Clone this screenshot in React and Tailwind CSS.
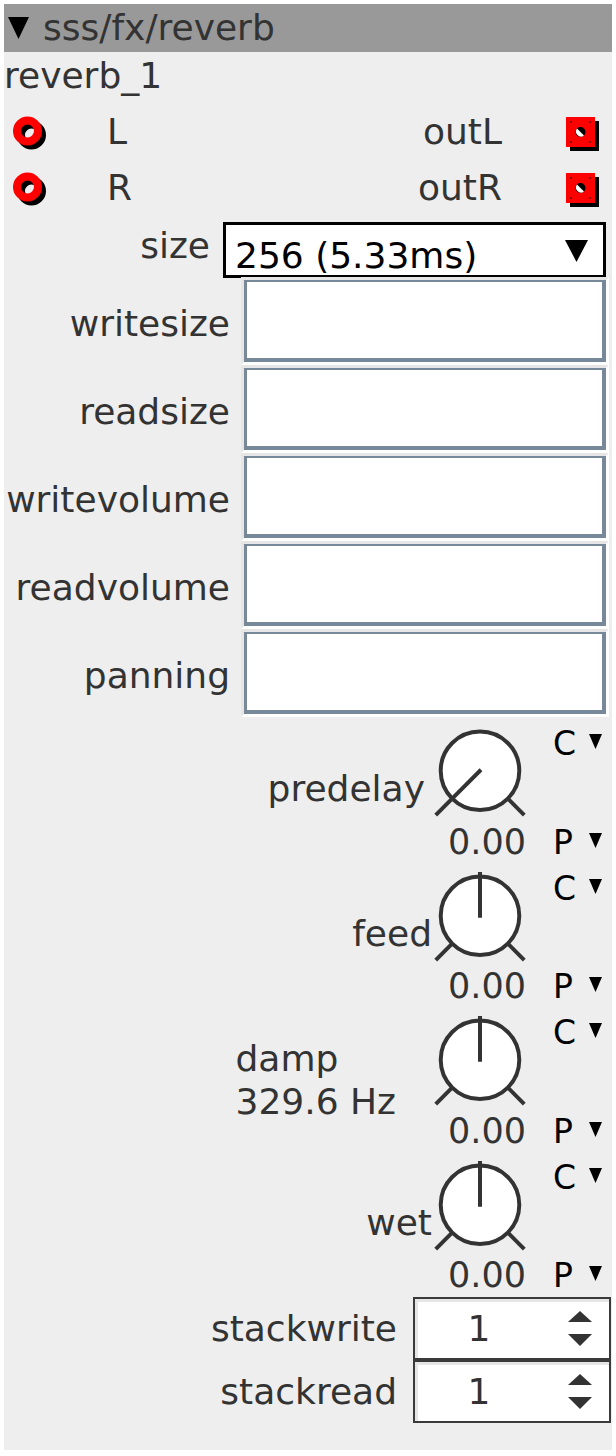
import React from 'react';

const txt = 'text-[36px] leading-[40px] text-[#333333]';

function Tri({ w, h, color = '#000', className = '' }) {
  return (
    <svg width={w} height={h} viewBox={`0 0 ${w} ${h}`} className={`block shrink-0 ${className}`}>
      <polygon points={`0,0 ${w},0 ${w / 2},${h}`} fill={color} />
    </svg>
  );
}

function UpTri({ w, h, color }) {
  return (
    <svg width={w} height={h} viewBox={`0 0 ${w} ${h}`} className="block">
      <polygon points={`0,${h} ${w},${h} ${w / 2},0`} fill={color} />
    </svg>
  );
}

function InPort() {
  return (
    <svg width="40" height="40" viewBox="0 0 40 40" className="block shrink-0">
      <circle cx="21.5" cy="23" r="10.5" fill="none" stroke="#000" strokeWidth="8" />
      <circle cx="17.5" cy="19" r="10.5" fill="none" stroke="#ff0000" strokeWidth="8" />
    </svg>
  );
}

function OutPort() {
  return (
    <svg width="40" height="40" viewBox="0 0 40 40" className="block shrink-0">
      <rect x="7" y="9" width="29" height="30" fill="#000" />
      <rect x="3" y="5" width="29" height="30" fill="#ff0000" />
      <rect x="7" y="9" width="2" height="2" fill="#8b0000" />
      <rect x="26" y="9" width="2" height="2" fill="#8b0000" />
      <rect x="7" y="29" width="2" height="2" fill="#8b0000" />
      <rect x="26" y="29" width="2" height="2" fill="#8b0000" />
      <circle cx="17.5" cy="20" r="5" fill="#000" />
      <path d="M14 16.5 A5 5 0 0 0 21 23.5 Z" fill="#fff" />
    </svg>
  );
}

function Knob({ min }) {
  return (
    <svg width="96" height="95" viewBox="0 0 96 95" className="block">
      <circle cx="48" cy="44" r="39.5" fill="#fff" stroke="#333" strokeWidth="4" />
      <line x1="20" y1="72" x2="3.5" y2="88.5" stroke="#333" strokeWidth="4" />
      <line x1="76" y1="72" x2="92.5" y2="88.5" stroke="#333" strokeWidth="4" />
      {min ? (
        <line x1="49" y1="43" x2="20" y2="72" stroke="#333" strokeWidth="4" />
      ) : (
        <line x1="48" y1="46" x2="48" y2="0" stroke="#333" strokeWidth="4" />
      )}
    </svg>
  );
}

function PortRow({ name, out }) {
  return (
    <div className="flex items-center h-[56px]">
      <div className="ml-[6px]">
        <InPort />
      </div>
      <span className={`${txt} ml-[57px]`}>{name}</span>
      <span className={`${txt} flex-1 text-right mr-[61px]`}>{out}</span>
      <div className="mr-[9px]">
        <OutPort />
      </div>
    </div>
  );
}

function Field({ name }) {
  return (
    <div className="flex h-[88px]">
      <div className={`${txt} flex-1 self-center text-right pr-[11px] mt-[5px] whitespace-nowrap`}>{name}</div>
      <div className="w-[368px] shrink-0 mr-[3px] border-[3px] border-t-[#e6e6e6] border-l-[#e6e6e6] border-b-white border-r-white">
        <div className="h-full bg-white border-[#778899] border-t-2 border-l-[3px] border-r-4 border-b-4" />
      </div>
    </div>
  );
}

function KnobBlock({ label, min, labelClass = '' }) {
  return (
    <div className="flex h-[144.5px]">
      <div className="flex-1 flex items-center justify-end">
        <div className={`${txt} whitespace-nowrap ${labelClass}`}>{label}</div>
      </div>
      <div className="w-[96px] shrink-0 flex flex-col pt-[10px]">
        <Knob min={min} />
        <div className="text-[35px] leading-[40px] text-[#333333] text-right pr-[2px] whitespace-nowrap">0.00</div>
      </div>
      <div className="ml-[25px] w-[59px] shrink-0 flex flex-col justify-between pt-[9px] pb-[1px] text-black text-[33px] leading-[36px]">
        <div className="flex items-start">
          <span>C</span>
          <Tri w={13} h={15} className="ml-[13px] mt-[8px]" />
        </div>
        <div className="flex items-start">
          <span>P</span>
          <Tri w={13} h={15} className="ml-[16px] mt-[8px]" />
        </div>
      </div>
    </div>
  );
}

function Spin({ name }) {
  return (
    <div className="flex items-center h-[63px]">
      <div className={`${txt} flex-1 text-right pr-[16px]`}>{name}</div>
      <div className="w-[198px] h-full mr-[1px] shrink-0 flex bg-white border-2 border-[#3a3a3a] shadow-[inset_3px_3px_0_#e6e6e6]">
        <div className={`${txt} flex-1 self-center text-center pr-[8px]`}>1</div>
        <div className="w-[58px] flex flex-col items-center justify-center gap-[12px]">
          <UpTri w={24} h={11} color="#333" />
          <Tri w={24} h={12} color="#333" />
        </div>
      </div>
    </div>
  );
}

export default function App() {
  return (
    <div className="bg-white p-[4px] w-[616px]" style={{ fontFamily: '"DejaVu Sans", Verdana, sans-serif' }}>
      <div className="w-[608px] h-[1446px] bg-[#eeeeee] overflow-hidden">
        <div className="flex items-center h-[48px] bg-[#999999]">
          <Tri w={21} h={22} className="ml-[4px]" />
          <span className={`${txt} ml-[14px]`}>sss/fx/reverb</span>
        </div>
        <div className={`${txt} h-[48px] leading-[48px]`}>reverb_1</div>
        <div className="h-[4px]" />
        <PortRow name="L" out="outL" />
        <PortRow name="R" out="outR" />

        <div className="flex items-start h-[61px]">
          <div className={`${txt} flex-1 text-right pr-[13px] mt-[10px]`}>size</div>
          <div className="w-[383px] h-[56px] mt-[6px] mr-[6px] shrink-0 flex items-start bg-white border-[3px] border-black">
            <span className="text-[36px] leading-[40px] text-black ml-[9px] mt-[11px] whitespace-nowrap">256 (5.33ms)</span>
            <Tri w={23} h={22} className="ml-auto mr-[15px] mt-[15px]" />
          </div>
        </div>

        <Field name="writesize" />
        <Field name="readsize" />
        <Field name="writevolume" />
        <Field name="readvolume" />
        <Field name="panning" />

        <KnobBlock label="predelay" min labelClass="mr-[7px]" />
        <KnobBlock label="feed" />
        <KnobBlock
          label={
            <>
              damp
              <br />
              329.6 Hz
            </>
          }
          labelClass="leading-[43px] text-left mr-[36px] mt-[4px]"
        />
        <KnobBlock label="wet" />

        <div className="mt-[2px]">
          <Spin name="stackwrite" />
          <Spin name="stackread" />
        </div>
      </div>
    </div>
  );
}
